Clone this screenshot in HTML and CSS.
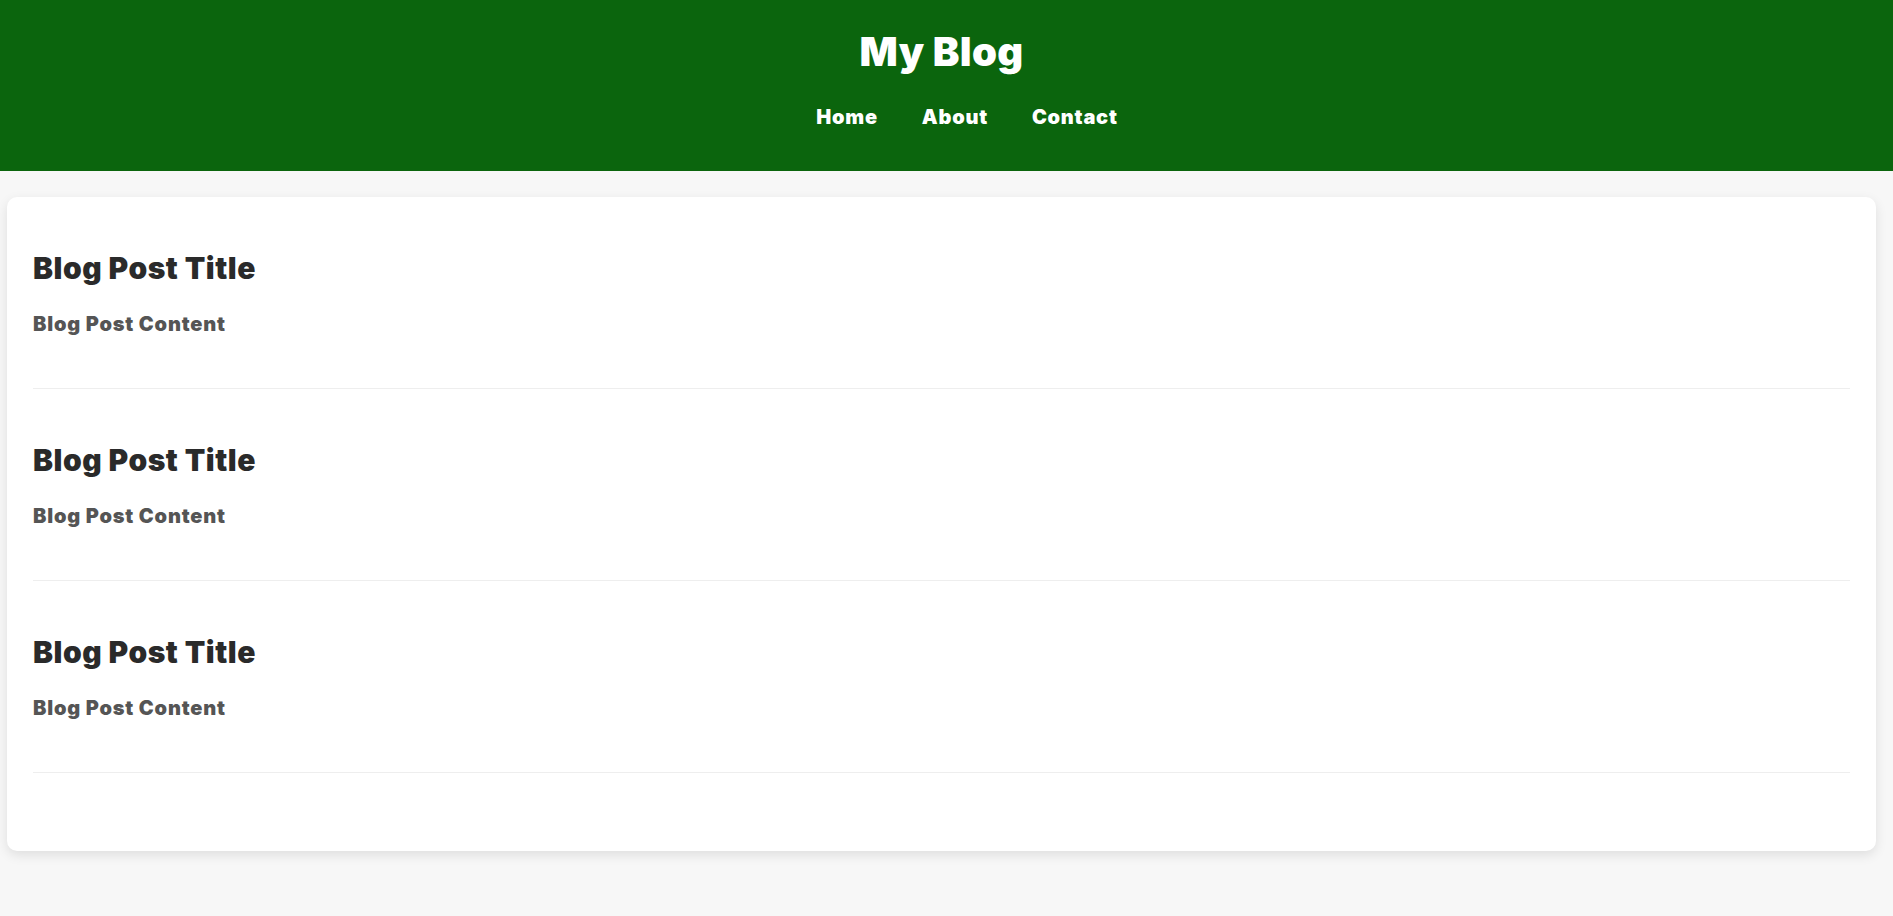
FILE: index.html
```html
<!DOCTYPE html>
<html>
<head>
<meta charset="utf-8">
<title>My Blog</title>
<link rel="stylesheet" href="styles.css">
</head>
<body>
<header class="site-header">
  <h1 class="site-title">My Blog</h1>
  <nav class="site-nav">
    <a href="#">Home</a>
    <a href="#">About</a>
    <a href="#">Contact</a>
  </nav>
</header>
<main class="card">
  <article class="post">
    <h2 class="post-title">Blog Post Title</h2>
    <p class="post-content">Blog Post Content</p>
  </article>
  <article class="post">
    <h2 class="post-title">Blog Post Title</h2>
    <p class="post-content">Blog Post Content</p>
  </article>
  <article class="post">
    <h2 class="post-title">Blog Post Title</h2>
    <p class="post-content">Blog Post Content</p>
  </article>
</main>
</body>
</html>
```
FILE: styles.css
```css
html, body {
  margin: 0;
  padding: 0;
}
body {
  background: #f7f7f7;
  font-family: Inter, "Liberation Sans", sans-serif;
  height: 916px;
  overflow: hidden;
}
.site-header {
  background: #0b650d;
  color: #fff;
  text-align: center;
  padding: 28px 10px 42px 0;
}
.site-title {
  margin: 0;
  font-size: 40px;
  line-height: 48px;
  font-weight: 900;
  letter-spacing: 0.3px;
}
.site-nav {
  margin-top: 29px;
  padding-left: 51px;
  display: flex;
  justify-content: center;
  gap: 44px;
  font-size: 20px;
  line-height: 24px;
  font-weight: 900;
  letter-spacing: 0.75px;
}
.site-nav a {
  color: #fff;
  text-decoration: none;
}
.card {
  margin: 26px 17px 0 7px;
  background: #fff;
  border-radius: 10px;
  box-shadow: 0 4px 12px rgba(0, 0, 0, 0.1);
  padding: 0 26px 78px;
}
.post {
  padding: 53px 0 52px;
  border-bottom: 1px solid #eeeeee;
}
.post-title {
  margin: 0 0 26px;
  font-size: 30px;
  line-height: 36px;
  font-weight: 900;
  letter-spacing: 0.5px;
  color: #2a2a2a;
}
.post-content {
  margin: 0;
  font-size: 20px;
  line-height: 24px;
  font-weight: 900;
  letter-spacing: 0.8px;
  color: #555;
}
```
